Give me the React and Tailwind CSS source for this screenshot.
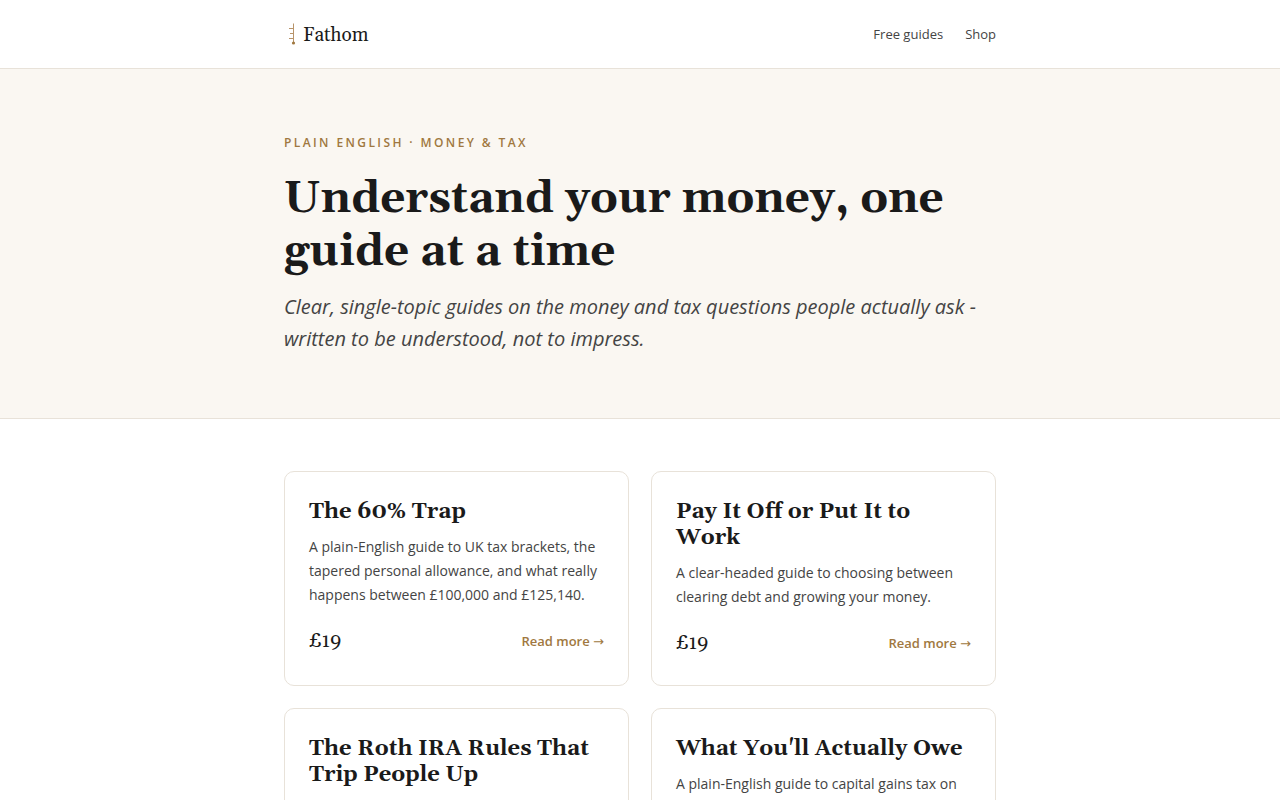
const guides = [
  {
    title: 'The 60% Trap',
    blurb: 'A plain-English guide to UK tax brackets, the tapered personal allowance, and what really happens between £100,000 and £125,140.',
    price: '£19',
  },
  {
    title: 'Pay It Off or Put It to Work',
    blurb: 'A clear-headed guide to choosing between clearing debt and growing your money.',
    price: '£19',
  },
  {
    title: 'The Roth IRA Rules That Trip People Up',
    blurb: 'A plain-English guide to Roth contributions, conversions and withdrawals.',
    price: '£19',
  },
  {
    title: "What You'll Actually Owe",
    blurb: 'A plain-English guide to capital gains tax on shares, funds and property.',
    price: '£19',
  },
]

function Logo() {
  return (
    <a href="#" className="flex items-center gap-1 pt-0.5 font-['Gelasio','Liberation_Serif',serif] text-[19px] leading-6 text-[#1a1a1a]">
      <svg width="15" height="24" viewBox="0 0 15 24" fill="none" stroke="#b8946a">
        <path d="M9.5 0.5v19" />
        <path d="M5 5.5h4.5M6 10.5h3.5M5 15.5h4.5" />
        <circle cx="9.5" cy="20" r="1.6" fill="#a07840" stroke="none" />
      </svg>
      Fathom
    </a>
  )
}

function GuideCard({ guide }) {
  return (
    <article className="rounded-[10px] border border-[#e8e2d9] bg-white px-6 pt-[27px] pb-[26px]">
      <h2 className="font-['Gelasio','Liberation_Serif',serif] text-[22px] leading-[26px] font-bold">{guide.title}</h2>
      <p className="mt-[10px] text-sm leading-6 text-[#444444]">{guide.blurb}</p>
      <div className="mt-[18px] flex items-center justify-between">
        <span className="font-['Gelasio','Liberation_Serif',serif] text-xl leading-8">{guide.price}</span>
        <a href="#" className="text-[13px] leading-5 font-semibold text-[#a07840]">
          Read more <span className="font-['DejaVu_Sans',sans-serif] font-normal">→</span>
        </a>
      </div>
    </article>
  )
}

export default function App() {
  return (
    <div className="min-h-screen bg-white font-['Open_Sans','Noto_Sans',sans-serif] text-[#1a1a1a]">
      <header className="border-b border-[#e8e2d9]">
        <div className="mx-auto flex h-17 max-w-[760px] items-center justify-between px-6">
          <Logo />
          <nav className="flex gap-[22px] pt-0.5 text-[13px] text-[#444444]">
            <a href="#">Free guides</a>
            <a href="#">Shop</a>
          </nav>
        </div>
      </header>
      <section className="border-b border-[#e8e2d9] bg-[#faf7f2]">
        <div className="mx-auto max-w-[760px] px-6 pt-16 pb-[63px]">
          <p className="text-xs leading-5 font-semibold tracking-[0.2em] text-[#a07840] uppercase">Plain English · Money &amp; Tax</p>
          <h1 className="mt-5 font-['Gelasio','Liberation_Serif',serif] text-[44px] leading-[53px] font-bold">Understand your money, one guide at a time</h1>
          <p className="mt-3 text-xl leading-8 text-[#444444] italic">
            Clear, single-topic guides on the money and tax questions people actually ask - written to be understood, not to impress.
          </p>
        </div>
      </section>
      <main className="mx-auto grid max-w-[760px] grid-cols-2 gap-[22px] px-6 py-13">
        {guides.map((guide) => (
          <GuideCard key={guide.title} guide={guide} />
        ))}
      </main>
    </div>
  )
}
